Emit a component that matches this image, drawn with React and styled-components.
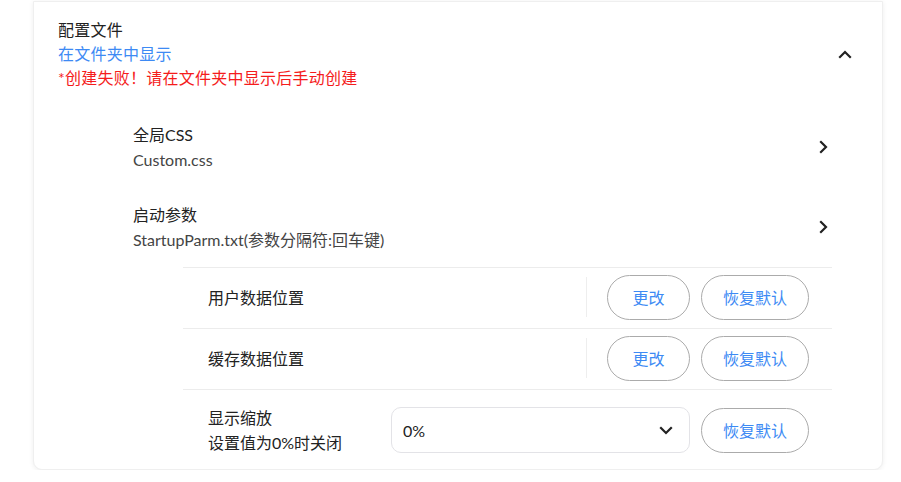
import React from "react";
import styled, { createGlobalStyle } from "styled-components";

const Global = createGlobalStyle`
  html, body { margin: 0; padding: 0; background: #fff; }
  body {
    font-family: "Lato", "Noto Sans CJK SC", sans-serif;
    font-size: 16px;
    color: #222;
  }
  * { box-sizing: border-box; }
`;

const Page = styled.div`
  padding: 1px 18px 0 33px;
`;

const Card = styled.section`
  background: #fff;
  border: 1px solid #efefef;
  border-radius: 0 0 9px 9px;
  box-shadow: 0 1px 5px rgba(0, 0, 0, 0.07);
`;

const Header = styled.div`
  display: flex;
  align-items: center;
  justify-content: space-between;
  padding: 16px 30px 0 24px;
`;

const Lines = styled.div`
  display: flex;
  flex-direction: column;
  letter-spacing: 0.25px;
`;

const Line = styled.div`
  line-height: 24px;
  color: ${(p) => (p.$tone === "link" ? "#3d8af4" : p.$tone === "error" ? "#f51c1c" : "#222")};
`;

const List = styled.div`
  margin: 17px 53px 0 99px;
`;

const Item = styled.div`
  display: flex;
  align-items: center;
  justify-content: space-between;
  padding: 15px 0;
`;

const ItemTitle = styled.div`
  line-height: 25px;
  color: #222;
`;

const ItemSub = styled.div`
  line-height: 25px;
  color: #444;
`;

const Panel = styled.div`
  margin: 0 50px 0 149px;
`;

const Row = styled.div`
  display: flex;
  align-items: center;
  border-top: 1px solid #ececec;
  padding: ${(p) => (p.$tall ? "15px 23px 14px 25px" : "0 23px 2px 25px")};
  height: ${(p) => (p.$tall ? "auto" : "61px")};
`;

const Label = styled.div`
  flex: ${(p) => (p.$fixed ? "0 0 183px" : "1 1 auto")};
  line-height: 25px;
  color: #222;
  white-space: nowrap;
`;

const VDivider = styled.div`
  flex: 0 0 1px;
  height: 40px;
  background: #eeeeee;
  margin-right: 20px;
`;

const Buttons = styled.div`
  display: flex;
  gap: 11px;
  flex-shrink: 0;
`;

const PillButton = styled.button`
  flex-shrink: 0;
  height: 45px;
  min-width: 83px;
  padding: 0 21px;
  border: 1px solid #ababab;
  border-radius: 23px;
  background: #fff;
  color: #3d8af4;
  font: inherit;
  font-size: 16px;
  white-space: nowrap;
  cursor: pointer;
`;

const Select = styled.div`
  flex: 0 0 299px;
  height: 46px;
  margin-right: 11px;
  display: flex;
  align-items: center;
  justify-content: space-between;
  padding: 0 16px 0 11px;
  border: 1px solid #e3e3e7;
  border-radius: 10px;
  color: #222;
`;

const Chevron = ({ dir = "up" }) => {
  const pts = {
    up: "2,8 7,3 12,8",
    down: "2,3 7,8 12,3",
    right: "3,2 8,7 3,12",
  }[dir];
  const size = dir === "right" ? { w: 11, h: 14, vb: "0 0 11 14" } : { w: 14, h: 11, vb: "0 0 14 11" };
  return (
    <svg width={size.w} height={size.h} viewBox={size.vb} fill="none" style={{ flexShrink: 0 }}>
      <polyline points={pts} stroke="#222" strokeWidth="2.2" strokeLinecap="square" strokeLinejoin="miter" />
    </svg>
  );
};

export default function App() {
  return (
    <>
      <Global />
      <Page>
        <Card>
          <Header>
            <Lines>
              <Line>配置文件</Line>
              <Line $tone="link">在文件夹中显示</Line>
              <Line $tone="error">*创建失败！请在文件夹中显示后手动创建</Line>
            </Lines>
            <Chevron dir="up" />
          </Header>
          <List>
            <Item>
              <div>
                <ItemTitle>全局CSS</ItemTitle>
                <ItemSub>Custom.css</ItemSub>
              </div>
              <Chevron dir="right" />
            </Item>
            <Item>
              <div>
                <ItemTitle>启动参数</ItemTitle>
                <ItemSub>StartupParm.txt(参数分隔符:回车键)</ItemSub>
              </div>
              <Chevron dir="right" />
            </Item>
          </List>
          <Panel>
            <Row>
              <Label>用户数据位置</Label>
              <VDivider />
              <Buttons>
                <PillButton>更改</PillButton>
                <PillButton>恢复默认</PillButton>
              </Buttons>
            </Row>
            <Row>
              <Label>缓存数据位置</Label>
              <VDivider />
              <Buttons>
                <PillButton>更改</PillButton>
                <PillButton>恢复默认</PillButton>
              </Buttons>
            </Row>
            <Row $tall>
              <Label $fixed>
                显示缩放
                <br />
                设置值为0%时关闭
              </Label>
              <Select>
                <span>0%</span>
                <Chevron dir="down" />
              </Select>
              <PillButton>恢复默认</PillButton>
            </Row>
          </Panel>
        </Card>
      </Page>
    </>
  );
}
